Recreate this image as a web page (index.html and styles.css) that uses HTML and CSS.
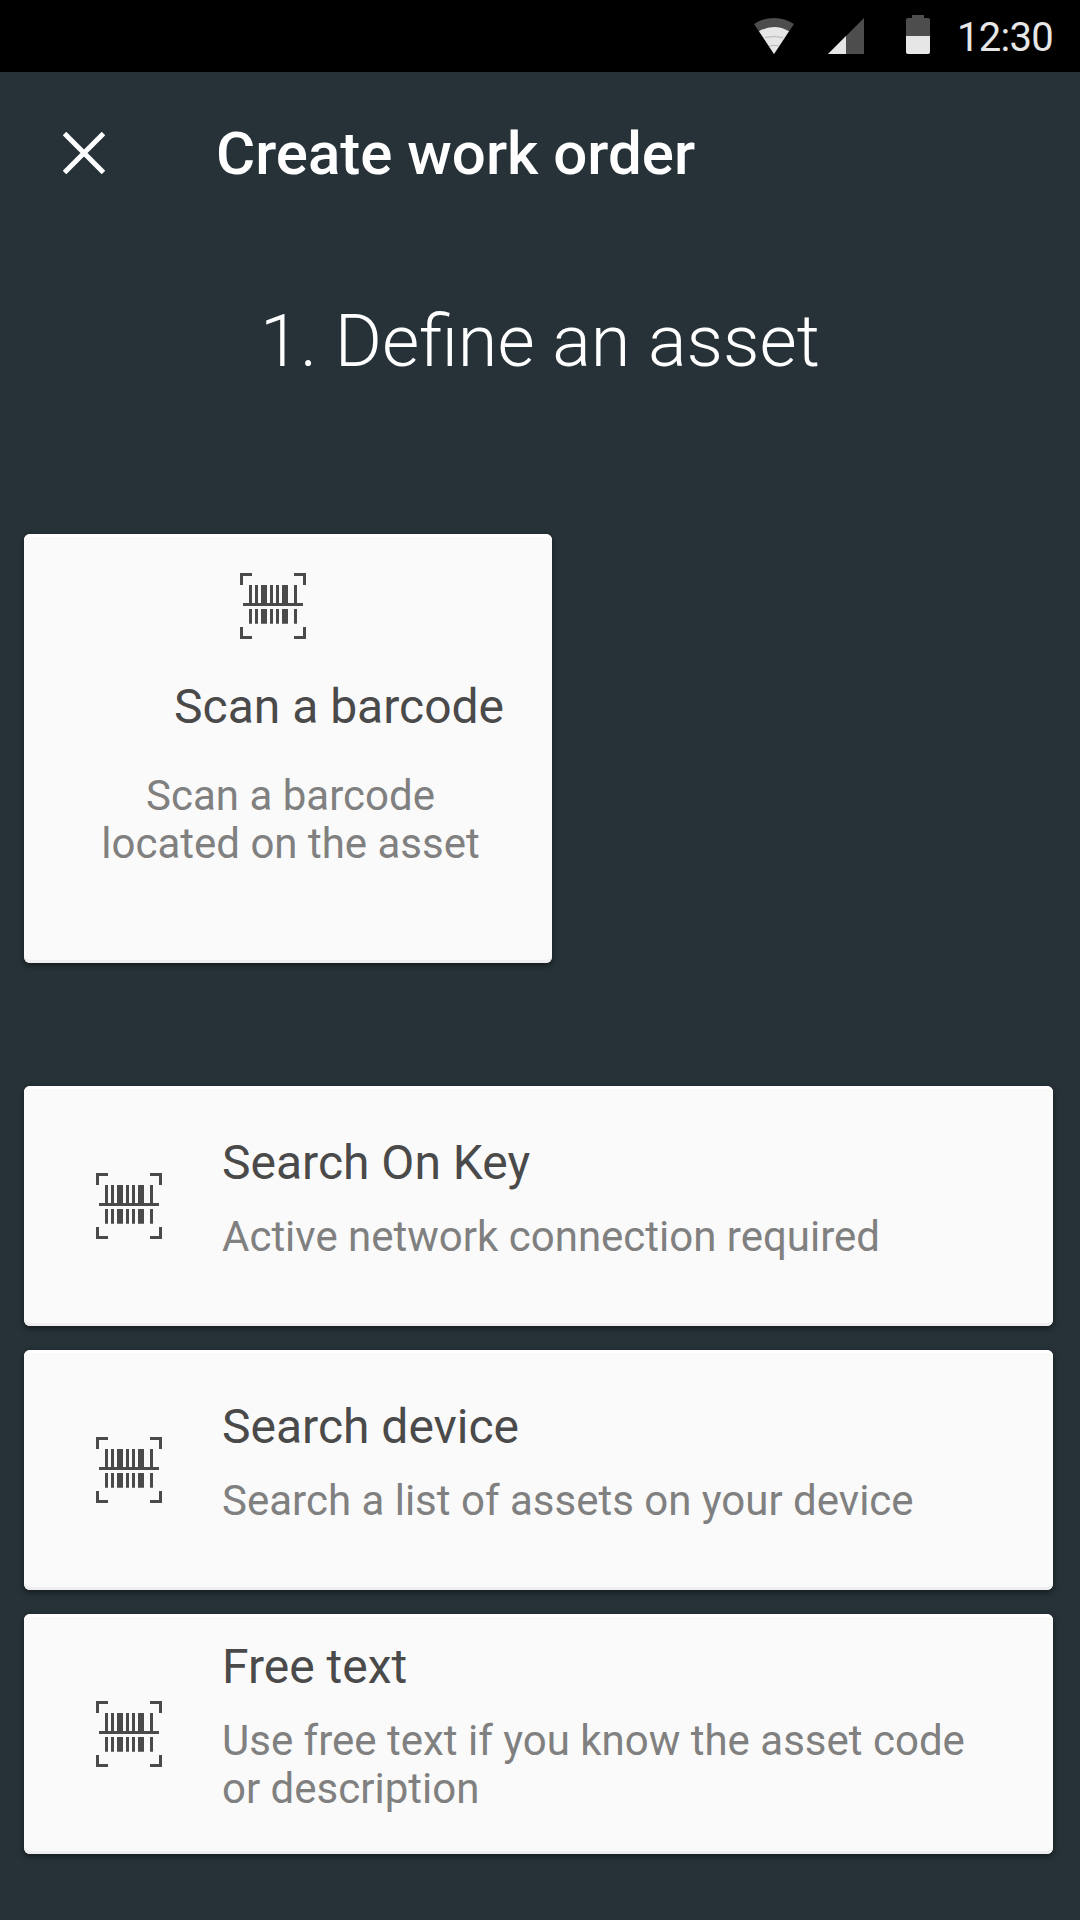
FILE: index.html
```html
<!DOCTYPE html>
<html lang="en">
<head>
<meta charset="utf-8">
<title>Create work order</title>
<link rel="stylesheet" href="styles.css">
</head>
<body>
<svg class="defs" aria-hidden="true">
  <symbol id="barcode" viewBox="0 0 66 66">
    <path d="M0 0h12v3H3v9H0zM54 0h12v12h-3V3h-9zM0 54h3v9h9v3H0zM63 54h3v12H54v-3h9zM3 30h60v3H3z"/>
    <path d="M9 12h3v18H9zM15 12h3v18h-3zM21 12h6v18h-6zM30 12h3v18h-3zM36 12h3v18h-3zM42 12h6v18h-6zM54 12h3v18h-3z"/>
    <path d="M9 36h3v14.7H9zM15 36h3v14.7h-3zM21 36h6v14.7h-6zM30 36h3v14.7h-3zM36 36h3v14.7h-3zM42 36h6v14.7h-6zM54 36h3v14.7h-3z"/>
  </symbol>
</svg>
<div class="screen">
  <div class="status-bar">
    <svg class="wifi" viewBox="0 0 40 36">
      <path class="dim" d="M20 36L0 6Q9 0 20 0T40 6z"/>
      <path class="lit" d="M20 36L5 13.300Q12 9 20 9T35 13.300z"/>
      <path class="arc" d="M11 19.500Q20 17.500 29 19.500M15.500 28Q20 26.500 24.500 28"/>
    </svg>
    <svg class="signal" viewBox="0 0 36 36">
      <path class="dim" d="M36 0v36H0z"/>
      <path class="lit" d="M18 18v18H0z"/>
    </svg>
    <svg class="battery" viewBox="0 0 24 39">
      <path class="dim" d="M6 0h12v3h4q2 0 2 2v16H0V5q0-2 2-2h4z"/>
      <path class="lit" d="M0 21h24v16q0 2-2 2H2q-2 0-2-2z"/>
    </svg>
    <span class="clock">12:30</span>
  </div>
  <header class="app-bar">
    <svg class="close" viewBox="0 0 42 42"><path d="M1.500 1.500l39 39M40.500 1.500l-39 39"/></svg>
    <h1 class="title">Create work order</h1>
  </header>
  <main class="content">
    <h2 class="step">1. Define an asset</h2>
    <section class="card scan">
      <svg class="icon"><use href="#barcode"/></svg>
      <h3 class="card-title">Scan a barcode</h3>
      <p class="card-text">Scan a barcode<br>located on the asset</p>
    </section>
    <div class="list">
      <section class="card row">
        <svg class="icon"><use href="#barcode"/></svg>
        <div class="row-body">
          <h3 class="card-title">Search On Key</h3>
          <p class="card-text">Active network connection required</p>
        </div>
      </section>
      <section class="card row">
        <svg class="icon"><use href="#barcode"/></svg>
        <div class="row-body">
          <h3 class="card-title">Search device</h3>
          <p class="card-text">Search a list of assets on your device</p>
        </div>
      </section>
      <section class="card row">
        <svg class="icon"><use href="#barcode"/></svg>
        <div class="row-body">
          <h3 class="card-title">Free text</h3>
          <p class="card-text">Use free text if you know the asset code<br>or description</p>
        </div>
      </section>
    </div>
  </main>
</div>
</body>
</html>
```
FILE: styles.css
```css
* { box-sizing: border-box; }
body, h1, h2, h3, p { margin: 0; font-weight: 400; }
body { font-family: Roboto, sans-serif; background: #263238; }
svg { display: block; flex: none; }
.defs { display: none; }

.screen {
  width: 1080px;
  height: 1920px;
  overflow: hidden;
  background: #263238;
}

.status-bar {
  display: flex;
  align-items: flex-start;
  justify-content: flex-end;
  height: 72px;
  padding-right: 26px;
  background: #000;
}
.wifi { width: 40px; height: 36px; margin: 18px 34px 0 0; }
.signal { width: 36px; height: 36px; margin: 18px 42px 0 0; }
.battery { width: 24px; height: 39px; margin: 15px 27px 0 0; }
.dim { fill: #4d4d4d; }
.lit { fill: #e6e6e6; }
.arc { fill: none; stroke: #b5b5b5; stroke-width: 1; }
.clock {
  width: 97px;
  margin-top: 14px;
  font-size: 40px;
  line-height: 48px;
  letter-spacing: -0.7px;
  color: #e6e6e6;
  white-space: nowrap;
}

.app-bar {
  display: flex;
  align-items: center;
  gap: 111px;
  height: 162px;
  padding-left: 63px;
}
.close { width: 42px; height: 42px; }
.close path { stroke: #fff; stroke-width: 5; }
.title {
  padding-top: 2px;
  font-size: 60px;
  line-height: 72px;
  font-weight: 500;
  color: #fff;
  white-space: nowrap;
}

.content { padding: 66px 27px 0 24px; }
.step {
  margin-right: -3px;
  font-size: 72px;
  line-height: 84px;
  font-weight: 300;
  color: #fff;
  text-align: center;
}

.card {
  border-radius: 6px;
  background: #fafafa;
  box-shadow: inset 0 3px 0 #fff, inset 0 -3px 0 #eee,
    0 3px 6px rgba(0, 0, 0, .4), 0 0 3px rgba(0, 0, 0, .15);
}
.icon { width: 66px; height: 66px; fill: #4a4a4a; }
.card-title { font-size: 48px; line-height: 56px; color: #4a4a4a; white-space: nowrap; }
.card-text { font-size: 42px; line-height: 48px; color: #808080; white-space: nowrap; }

.scan {
  display: flex;
  flex-direction: column;
  width: 528px;
  height: 429px;
  margin-top: 150px;
  padding-top: 39px;
}
.scan .icon { margin-left: 216px; }
.scan .card-title { margin: 40px 0 0 150px; }
.scan .card-text { width: 533px; margin-top: 37px; text-align: center; }

.list { display: flex; flex-direction: column; gap: 24px; margin-top: 123px; }
.row {
  display: flex;
  align-items: center;
  gap: 60px;
  height: 240px;
  padding-left: 72px;
}
.row-body { display: flex; flex-direction: column; gap: 22px; padding-bottom: 16px; }
```
